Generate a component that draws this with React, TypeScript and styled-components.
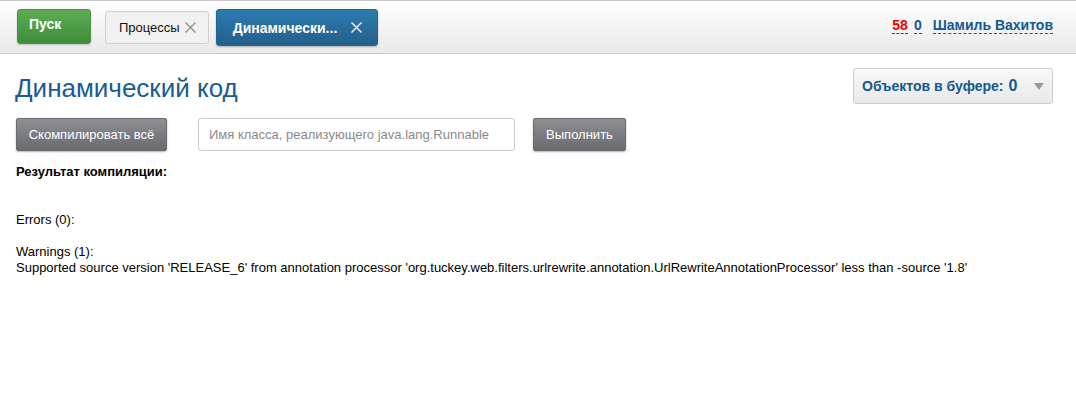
import React from "react";
import styled, { createGlobalStyle } from "styled-components";

const Global = createGlobalStyle`
  html, body { margin: 0; padding: 0; background: #fff; }
  body { font-family: "Liberation Sans", Arial, sans-serif; color: #000; }
`;

const Header = styled.header`
  height: 44px;
  border-top: 1px solid #c8c8c8;
  border-bottom: 1px solid #c8c8c8;
  background: linear-gradient(#ffffff, #e9e9e9);
  display: flex;
  align-items: flex-start;
  padding: 8px 23px 0 17px;
  box-sizing: content-box;
`;

const LeftGroup = styled.div`
  display: flex;
  align-items: flex-start;
  gap: 7px;
  flex: 1;
`;

const StartButton = styled.button`
  width: 74px;
  height: 35px;
  margin-right: 7px;
  border: 1px solid #4a9445;
  border-radius: 3px;
  background: linear-gradient(#5cad54, #3f8c3b);
  color: #fff;
  font: bold 14px "Liberation Sans", Arial, sans-serif;
  text-align: left;
  padding: 0 0 5px 11px;
  box-shadow: 0 1px 2px rgba(0, 0, 0, 0.2);
`;

const Tab = styled.div<{ $active?: boolean }>`
  display: flex;
  align-items: center;
  box-sizing: border-box;
  height: ${(p) => (p.$active ? "37px" : "33px")};
  margin-top: ${(p) => (p.$active ? "0" : "2px")};
  padding: ${(p) => (p.$active ? "0 15px 0 16px" : "0 12px 0 13px")};
  border-radius: 3px;
  border: 1px solid ${(p) => (p.$active ? "#24648f" : "#cfcfcf")};
  background: ${(p) =>
    p.$active ? "linear-gradient(#2b7cb0, #235f8b)" : "#f1f1f1"};
  color: ${(p) => (p.$active ? "#fff" : "#111")};
  font-size: ${(p) => (p.$active ? "14px" : "13px")};
  font-weight: ${(p) => (p.$active ? "bold" : "normal")};
  box-shadow: ${(p) => (p.$active ? "0 1px 2px rgba(0,0,0,0.25)" : "none")};
  gap: ${(p) => (p.$active ? "14px" : "5px")};
`;

const Close = styled.svg<{ $color: string }>`
  width: 11px;
  height: 11px;
  stroke: ${(p) => p.$color};
  stroke-width: 1.3;
`;

const CloseIcon = ({ color }: { color: string }) => (
  <Close $color={color} viewBox="0 0 11 11">
    <path d="M0.5 0.5 L10.5 10.5 M10.5 0.5 L0.5 10.5" fill="none" />
  </Close>
);

const UserArea = styled.div`
  display: flex;
  align-items: center;
  height: 34px;
  font-weight: bold;
  font-size: 14px;
`;

const Dashed = styled.span<{ $color: string; $ml?: number }>`
  color: ${(p) => p.$color};
  margin-left: ${(p) => p.$ml ?? 0}px;
  border-bottom: 1px dashed ${(p) => p.$color};
  line-height: 15px;
`;

const Main = styled.main`
  padding: 0 23px 0 16px;
`;

const TitleRow = styled.div`
  display: flex;
  justify-content: space-between;
  align-items: flex-start;
  padding-top: 14px;
`;

const Title = styled.h1`
  margin: 3px 0 0 -1px;
  font-weight: normal;
  font-size: 26px;
  color: #195b94;
  line-height: 34px;
`;

const Buffer = styled.div`
  width: 200px;
  height: 36px;
  box-sizing: border-box;
  border: 1px solid #cdcdcd;
  border-radius: 3px;
  background: linear-gradient(#f8f8f8, #e9e9e9);
  display: flex;
  align-items: center;
  padding: 0 8px 0 8px;
  color: #14598f;
  font-weight: bold;
  font-size: 14px;
`;

const BufferCount = styled.span`
  font-size: 16px;
  margin-left: 5px;
`;

const Caret = styled.span`
  margin-left: auto;
  width: 0;
  height: 0;
  border-left: 5px solid transparent;
  border-right: 5px solid transparent;
  border-top: 7px solid #9a9a9a;
`;

const Toolbar = styled.div`
  display: flex;
  align-items: center;
  margin-top: 13px;
`;

const GrayButton = styled.button<{ $w: number }>`
  width: ${(p) => p.$w}px;
  height: 33px;
  border: 1px solid #6b6c70;
  border-radius: 2px;
  background: linear-gradient(#8d8f93, #696a6e);
  color: #fff;
  font: 13px "Liberation Sans", Arial, sans-serif;
  box-shadow: 0 1px 2px rgba(0, 0, 0, 0.3);
  padding: 0;
`;

const Input = styled.input`
  width: 317px;
  height: 33px;
  box-sizing: border-box;
  margin: 0 18px 0 31px;
  border: 1px solid #cccccc;
  border-radius: 3px;
  padding: 0 10px;
  font: 13px "Liberation Sans", Arial, sans-serif;
  &::placeholder { color: #8a8a8a; }
`;

const ResultLabel = styled.div`
  margin-top: 13px;
  font-weight: bold;
  font-size: 13px;
  line-height: 16px;
`;

const Output = styled.pre`
  margin: 32px 0 0;
  font: 13px/16px "Liberation Sans", Arial, sans-serif;
  white-space: pre-wrap;
`;

export default function App() {
  return (
    <>
      <Global />
      <Header>
        <LeftGroup>
          <StartButton>Пуск</StartButton>
          <Tab>
            Процессы
            <CloseIcon color="#8f8f8f" />
          </Tab>
          <Tab $active>
            Динамически...
            <CloseIcon color="#ffffff" />
          </Tab>
        </LeftGroup>
        <UserArea>
          <Dashed $color="#ee0000">58</Dashed>
          <Dashed $color="#14598f" $ml={6}>0</Dashed>
          <Dashed $color="#14598f" $ml={11}>Шамиль Вахитов</Dashed>
        </UserArea>
      </Header>
      <Main>
        <TitleRow>
          <Title>Динамический код</Title>
          <Buffer>
            Объектов в буфере:<BufferCount>0</BufferCount>
            <Caret />
          </Buffer>
        </TitleRow>
        <Toolbar>
          <GrayButton $w={151}>Скомпилировать всё</GrayButton>
          <Input placeholder="Имя класса, реализующего java.lang.Runnable" />
          <GrayButton $w={93}>Выполнить</GrayButton>
        </Toolbar>
        <ResultLabel>Результат компиляции:</ResultLabel>
        <Output>
          {"Errors (0):\n\nWarnings (1):\nSupported source version 'RELEASE_6' from annotation processor 'org.tuckey.web.filters.urlrewrite.annotation.UrlRewriteAnnotationProcessor' less than -source '1.8'"}
        </Output>
      </Main>
    </>
  );
}
